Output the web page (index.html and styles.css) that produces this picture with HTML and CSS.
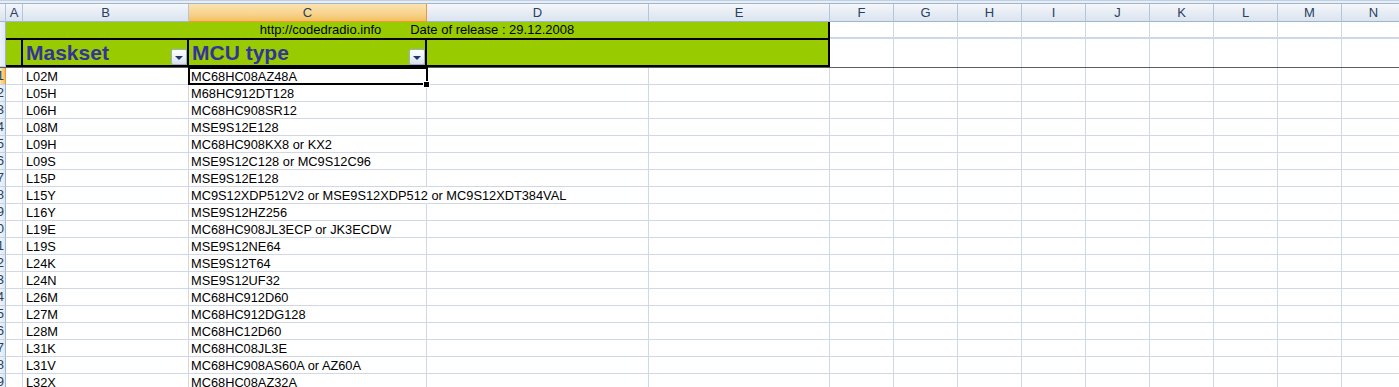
FILE: index.html
```html
<!DOCTYPE html>
<html>
<head>
<meta charset="utf-8">
<link rel="stylesheet" href="styles.css">
</head>
<body>
<div class="sheet">
  <div class="topstrip"></div>
  <div class="row colhead">
    <div class="ch c-rh"></div>
    <div class="ch c-a">A</div>
    <div class="ch c-b">B</div>
    <div class="ch c-c sel">C</div>
    <div class="ch c-d">D</div>
    <div class="ch c-e">E</div>
    <div class="ch c-f">F</div>
    <div class="ch c-f">G</div>
    <div class="ch c-f">H</div>
    <div class="ch c-f">I</div>
    <div class="ch c-f">J</div>
    <div class="ch c-f">K</div>
    <div class="ch c-f">L</div>
    <div class="ch c-f">M</div>
    <div class="ch c-f">N</div>
  </div>

  <div class="row r1">
    <div class="rh c-rh"></div>
    <div class="cell green merged-ae title">http://codedradio.info        Date of release : 29.12.2008</div>
    <div class="cell c-f"></div><div class="cell c-f"></div><div class="cell c-f"></div>
    <div class="cell c-f"></div><div class="cell c-f"></div><div class="cell c-f"></div>
    <div class="cell c-f"></div><div class="cell c-f"></div><div class="cell c-f"></div>
  </div>

  <div class="row r2">
    <div class="rh c-rh"></div>
    <div class="cell green hdr c-a"></div>
    <div class="cell green hdr c-b"><span class="htext">Maskset</span><span class="dd"><i></i></span></div>
    <div class="cell green hdr c-c"><span class="htext">MCU type</span><span class="dd"><i></i></span></div>
    <div class="cell green hdr merged-de"></div>
    <div class="cell c-f top"></div><div class="cell c-f top"></div><div class="cell c-f top"></div>
    <div class="cell c-f top"></div><div class="cell c-f top"></div><div class="cell c-f top"></div>
    <div class="cell c-f top"></div><div class="cell c-f top"></div><div class="cell c-f top"></div>
  </div>

  <div class="freeze"></div>

  <div id="data"></div>

  <div class="selection"></div>
  <div class="handle"></div>
</div>

<script>
(function () {
  var rows = [
    ["L02M", "MC68HC08AZ48A"],
    ["L05H", "M68HC912DT128"],
    ["L06H", "MC68HC908SR12"],
    ["L08M", "MSE9S12E128"],
    ["L09H", "MC68HC908KX8 or KX2"],
    ["L09S", "MSE9S12C128 or MC9S12C96"],
    ["L15P", "MSE9S12E128"],
    ["L15Y", "MC9S12XDP512V2 or MSE9S12XDP512 or MC9S12XDT384VAL", true],
    ["L16Y", "MSE9S12HZ256"],
    ["L19E", "MC68HC908JL3ECP or JK3ECDW"],
    ["L19S", "MSE9S12NE64"],
    ["L24K", "MSE9S12T64"],
    ["L24N", "MSE9S12UF32"],
    ["L26M", "MC68HC912D60"],
    ["L27M", "MC68HC912DG128"],
    ["L28M", "MC68HC12D60"],
    ["L31K", "MC68HC08JL3E"],
    ["L31V", "MC68HC908AS60A or AZ60A"],
    ["L32X", "MC68HC08AZ32A"]
  ];
  var html = "";
  for (var i = 0; i < rows.length; i++) {
    var r = rows[i];
    html += '<div class="row drow">';
    html += '<div class="rh c-rh' + (i === 0 ? ' rsel' : '') + '"><span>' + (11 + i) + '</span></div>';
    html += '<div class="cell c-a"></div>';
    html += '<div class="cell c-b txt">' + r[0] + '</div>';
    html += '<div class="cell c-c txt' + (r[2] ? ' spill' : '') + '">' + r[1] + '</div>';
    html += '<div class="cell c-d"></div>';
    html += '<div class="cell c-e"></div>';
    for (var k = 0; k < 9; k++) html += '<div class="cell c-f"></div>';
    html += '</div>';
  }
  document.getElementById("data").innerHTML = html;
})();
</script>
</body>
</html>
```

FILE: styles.css
```css
html, body {
  margin: 0;
  padding: 0;
  background: #ffffff;
  overflow: hidden;
}

.sheet {
  position: relative;
  width: 1399px;
  height: 387px;
  overflow: hidden;
  font-family: "Liberation Sans", Arial, sans-serif;
  font-size: 12.8px;
  color: #000;
}

.topstrip {
  height: 4px;
  box-sizing: border-box;
  background: #e8eef6;
  border-top: 1px solid #c3d0e0;
  border-bottom: 1px solid #9eb6ce;
  position: relative;
}

.row {
  display: flex;
  flex-wrap: nowrap;
  width: 1406px;
}

.row > div {
  flex: none;
  box-sizing: border-box;
}

/* column widths */
.c-rh { width: 6px; }
.c-a { width: 17px; }
.c-b { width: 166px; }
.c-c { width: 238px; }
.c-d { width: 222px; }
.c-e { width: 181px; }
.c-f { width: 64px; }
.merged-ae { width: 824px; }
.merged-de { width: 403px; }

/* column headers */
.colhead { height: 18px; }
.ch {
  height: 18px;
  background: linear-gradient(#f4f7fb, #e6ecf4 55%, #dbe3ee);
  border-right: 1px solid #b5c6da;
  border-bottom: 1px solid #9eb6ce;
  color: #27415f;
  font-size: 13px;
  line-height: 17px;
  text-align: center;
}
.ch.sel {
  background: linear-gradient(#fbe3b2, #f8d48f 55%, #f1c15f);
  border-right-color: #f29536;
  border-bottom-color: #f29536;
  color: #27415f;
}

/* row headers */
.rh {
  background: linear-gradient(90deg, #edf2f9, #e1e8f2);
  border-right: 1px solid #9eb6ce;
  border-bottom: 1px solid #c5d2e2;
  overflow: hidden;
  display: flex;
  justify-content: flex-end;
  color: #27415f;
  font-size: 13px;
  line-height: 16px;
  padding-right: 1px;
}
.rh span { flex: none; }
.rh.rsel {
  background: linear-gradient(90deg, #fbe3b2, #f1c15f);
  border-right-color: #f29536;
}

/* generic cells */
.cell {
  border-right: 1px solid #d0d7e5;
  border-bottom: 1px solid #d0d7e5;
  white-space: nowrap;
}

/* row 1 */
.r1 { height: 16px; }
.r1 > div { height: 16px; }
.r1 .rh { border-bottom: none; }
.green { background: #99cc00; }
.title {
  white-space: pre;
  text-align: center;
  font-size: 13px;
  line-height: 16px;
  border-right: 2px solid #000;
  border-bottom: none;
}

/* row 2 */
.r2 { height: 29px; }
.r2 > div { height: 29px; }
.hdr {
  border-top: 2px solid #000;
  border-bottom: 2px solid #000;
  border-right: 2px solid #000;
  display: flex;
  align-items: flex-end;
  justify-content: space-between;
  padding-left: 3px;
}
.htext {
  align-self: center;
  font-weight: bold;
  font-size: 21px;
  line-height: 25px;
  color: #333399;
}
.dd {
  width: 16px;
  height: 16px;
  box-sizing: border-box;
  border: 1px solid #9aafca;
  border-radius: 2px;
  background: linear-gradient(#ffffff, #eef2f8 50%, #d6dfeb);
  display: flex;
  align-items: center;
  justify-content: center;
}
.dd i {
  display: block;
  width: 0;
  height: 0;
  border-left: 4px solid transparent;
  border-right: 4px solid transparent;
  border-top: 4px solid #1c3a66;
  margin-top: 2px;
}
.cell.top { border-top: 1px solid #d0d7e5; border-bottom: none; }

/* freeze line */
.freeze {
  height: 1px;
  background: #5c5c5c;
}

/* data rows */
.drow { height: 17px; }
.drow > div { height: 17px; }
.txt {
  padding-left: 3px;
  line-height: 17px;
  overflow: visible;
}
.c-c.txt { padding-left: 2px; }
.spill { border-right-color: transparent; }

/* selection overlay */
.selection {
  position: absolute;
  left: 188px;
  top: 67px;
  width: 240px;
  height: 18px;
  box-sizing: border-box;
  border: 2px solid #000;
  pointer-events: none;
}
.handle {
  position: absolute;
  left: 423px;
  top: 81px;
  width: 7px;
  height: 7px;
  box-sizing: border-box;
  background: #000;
  border: 1px solid #fff;
}
```
